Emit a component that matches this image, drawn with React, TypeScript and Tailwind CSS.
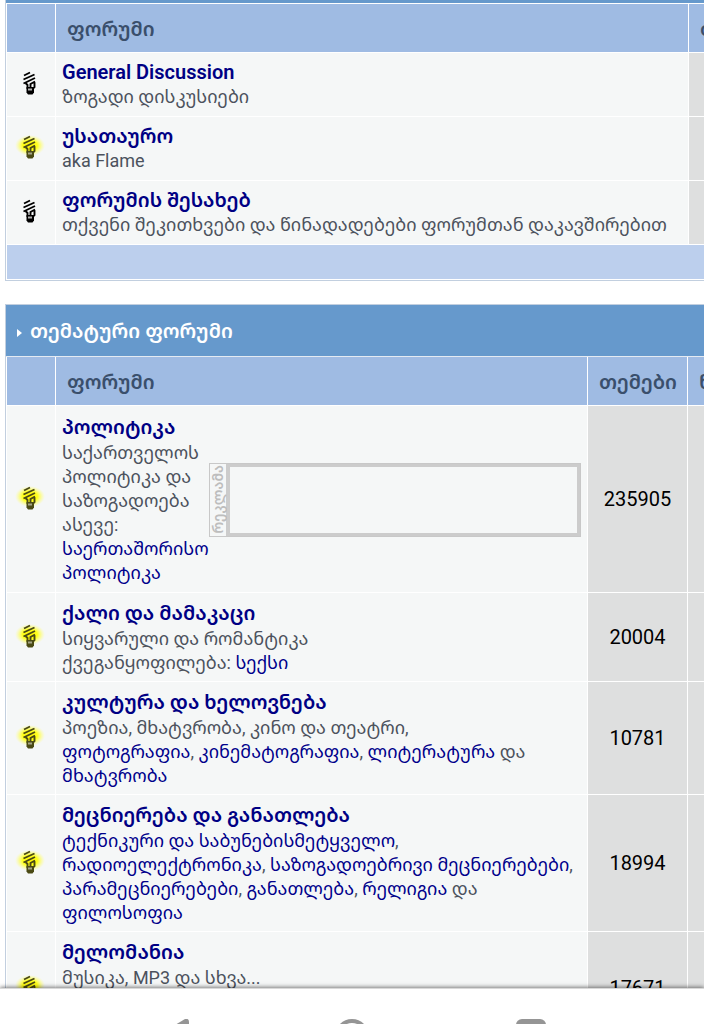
import type { ReactNode } from "react";
import clsx from "clsx";

interface Forum {
  id: string;
  title: string;
  unread: boolean;
  topics?: string;
  description: ReactNode;
  ad?: boolean;
}

function ForumLink({ children }: { children: ReactNode }) {
  return (
    <a href="#" className="text-[#00008b]">
      {children}
    </a>
  );
}

const generalForums: Forum[] = [
  { id: "general", title: "General Discussion", unread: false, description: "ზოგადი დისკუსიები" },
  { id: "untitled", title: "უსათაურო", unread: true, description: "aka Flame" },
  {
    id: "about",
    title: "ფორუმის შესახებ",
    unread: false,
    description: "თქვენი შეკითხვები და წინადადებები ფორუმთან დაკავშირებით",
  },
];

const topicForums: Forum[] = [
  {
    id: "politics",
    title: "პოლიტიკა",
    unread: true,
    topics: "235905",
    ad: true,
    description: (
      <>
        საქართველოს
        <br />
        პოლიტიკა და
        <br />
        საზოგადოება
        <br />
        ასევე:
        <br />
        <ForumLink>
          საერთაშორისო
          <br />
          პოლიტიკა
        </ForumLink>
      </>
    ),
  },
  {
    id: "relations",
    title: "ქალი და მამაკაცი",
    unread: true,
    topics: "20004",
    description: (
      <>
        სიყვარული და რომანტიკა
        <br />
        ქვეგანყოფილება: <ForumLink>სექსი</ForumLink>
      </>
    ),
  },
  {
    id: "culture",
    title: "კულტურა და ხელოვნება",
    unread: true,
    topics: "10781",
    description: (
      <>
        პოეზია, მხატვრობა, კინო და თეატრი,
        <br />
        <ForumLink>ფოტოგრაფია</ForumLink>, <ForumLink>კინემატოგრაფია</ForumLink>,{" "}
        <ForumLink>ლიტერატურა</ForumLink> და
        <br />
        <ForumLink>მხატვრობა</ForumLink>
      </>
    ),
  },
  {
    id: "science",
    title: "მეცნიერება და განათლება",
    unread: true,
    topics: "18994",
    description: (
      <>
        <ForumLink>ტექნიკური და საბუნებისმეტყველო</ForumLink>,
        <br />
        <ForumLink>რადიოელექტრონიკა</ForumLink>, <ForumLink>საზოგადოებრივი მეცნიერებები</ForumLink>,
        <br />
        <ForumLink>პარამეცნიერებები</ForumLink>, <ForumLink>განათლება</ForumLink>,{" "}
        <ForumLink>რელიგია</ForumLink> და
        <br />
        <ForumLink>ფილოსოფია</ForumLink>
      </>
    ),
  },
  {
    id: "music",
    title: "მელომანია",
    unread: true,
    topics: "17671",
    description: "მუსიკა, MP3 და სხვა...",
  },
];

function BulbIcon({ on }: { on: boolean }) {
  const ink = on ? "#4a4a14" : "#000000";
  return (
    <svg viewBox="0 0 30 24" className="mx-auto block h-6 w-[30px]" aria-hidden="true">
      <defs>
        <radialGradient id="glow">
          <stop offset="0" stopColor="#fff200" />
          <stop offset="0.5" stopColor="#ffff20" />
          <stop offset="1" stopColor="#ffff80" stopOpacity="0" />
        </radialGradient>
      </defs>
      {on && <ellipse cx="15" cy="10.5" rx="15" ry="10.5" fill="url(#glow)" />}
      <g fill="none" stroke={ink} strokeWidth="1.9">
        <path d="M9 4.500 15 1.500M8.500 8.500 19.500 3.500M8.500 12.500 20 7" />
        <path d="M10.500 12 12.500 14v4M20 10.500 15.500 13v3M19.500 11v5l-2 2" />
      </g>
      <path d="M11.500 16h7.500v5.500L17.500 23.500h-4.500l-1.500-2z" fill={ink} />
      <path d="M13 17.500h4v2h-4z" fill={on ? "#a5a488" : "#b0b0b0"} />
    </svg>
  );
}

function AdBox() {
  return (
    <div className="flex h-[74px] flex-1 self-center border border-[#c8c8c8]">
      <div className="flex w-4 items-center justify-center">
        <span className="rotate-180 text-sm leading-4 font-semibold whitespace-nowrap text-[#bdbdbd] [writing-mode:vertical-rl]">
          რეკლამა
        </span>
      </div>
      <div className="flex-1 border-3 border-l-4 border-[#cccccc]" />
    </div>
  );
}

interface ForumTableProps {
  forums: Forum[];
  label: string;
  withReplies?: boolean;
}

function ForumTable({ forums, label, withReplies }: ForumTableProps) {
  const head =
    "h-[49px] border-r border-b border-white bg-[#9fbbe3] px-[11px] pt-[2px] text-left text-xl leading-6 font-semibold text-[#3a4f6c]";
  const count = "border-r border-b border-white bg-[#dedfdf] text-center text-xl text-black";

  return (
    <table aria-label={label} className="w-full table-fixed border-separate border-spacing-0 border-l border-white">
      <colgroup>
        <col className="w-[49px]" />
        <col />
        <col className={withReplies ? "w-[100px]" : "w-24"} />
        {withReplies && <col className="w-[97px]" />}
      </colgroup>
      <thead>
        <tr>
          <th className={head} />
          <th className={head}>ფორუმი</th>
          <th className={head}>თემები</th>
          {withReplies && <th className={head}>ნახვები</th>}
        </tr>
      </thead>
      <tbody>
        {forums.map((forum) => (
          <tr key={forum.id}>
            <td className="border-r border-b border-white bg-[#f5f7f7] pr-[3px] pb-[3px]">
              <BulbIcon on={forum.unread} />
            </td>
            <td
              className={clsx(
                "border-r border-b border-white bg-[#f5f7f7] px-[6px]",
                withReplies ? "pt-[7px] pb-[6px]" : "pt-[6px] pb-[7px]",
                forum.ad ? "h-[187px] align-middle" : "align-top",
                forum.id === "music" && "h-[113px]",
              )}
            >
              <div className="flex">
                <div className={clsx("whitespace-nowrap", forum.ad && "w-[147px]")}>
                  <a
                    href="#"
                    className={clsx(
                      "block text-xl font-semibold text-[#000084]",
                      withReplies ? "leading-[27px]" : "leading-[26px]",
                    )}
                  >
                    {forum.title}
                  </a>
                  <p className="text-lg leading-6 text-[#4c525d]">{forum.description}</p>
                </div>
                {forum.ad && <AdBox />}
              </div>
            </td>
            <td className={count}>{forum.topics}</td>
            {withReplies && <td className={count} />}
          </tr>
        ))}
      </tbody>
    </table>
  );
}

export default function App() {
  return (
    <div className="flex h-screen flex-col overflow-hidden bg-white font-[Roboto,'Noto_Sans_Georgian','Noto_Sans','DejaVu_Sans',sans-serif]">
      <main className="-mr-[82px] min-h-0 flex-1 overflow-hidden pl-[5px]">
        <section className="border border-t-0 border-[#c2cfdf]">
          <div className="box-content h-[3px] border-b border-white bg-[#6699cc]" />
          <ForumTable forums={generalForums} label="ფორუმი" />
          <div className="m-px mt-0 h-[34px] bg-[#bccfed]" />
        </section>

        <section className="mt-[23px] border border-[#c2cfdf]">
          <h2 className="box-content flex h-[51px] items-center gap-2 border-b border-[#e4eaf2] bg-[#6699cc] pl-[11px] text-xl font-semibold text-white">
            <svg viewBox="0 0 5 8" className="mt-1 h-2 w-[5px]" aria-hidden="true">
              <path d="M0 0 5 4 0 8z" fill="#ffffff" />
            </svg>
            თემატური ფორუმი
          </h2>
          <ForumTable forums={topicForums} label="თემატური ფორუმი" withReplies />
        </section>
      </main>

      <nav className="relative grid h-9 shrink-0 grid-cols-3 overflow-hidden border-t border-[#d9d9d9] bg-white px-[83px] pt-[30px] shadow-[0_-1px_4px_rgba(0,0,0,0.5)]">
        <button type="button" aria-label="Back" className="flex justify-center">
          <svg viewBox="0 0 32 34" className="h-[34px] w-8 shrink-0">
            <path d="M28 0Q32-1 32 3V31Q32 35 28 33L3 19Q0 17 3 15Z" fill="#959595" />
          </svg>
        </button>
        <button type="button" aria-label="Home" className="flex justify-center">
          <svg viewBox="0 0 34 34" className="h-[34px] w-[34px] shrink-0">
            <circle cx="17" cy="17" r="15" fill="none" stroke="#959595" strokeWidth="4" />
          </svg>
        </button>
        <button type="button" aria-label="Recent apps" className="flex justify-center">
          <svg viewBox="0 0 30 30" className="h-[30px] w-[30px] shrink-0">
            <rect width="30" height="30" rx="6" fill="#959595" />
          </svg>
        </button>
      </nav>
    </div>
  );
}
